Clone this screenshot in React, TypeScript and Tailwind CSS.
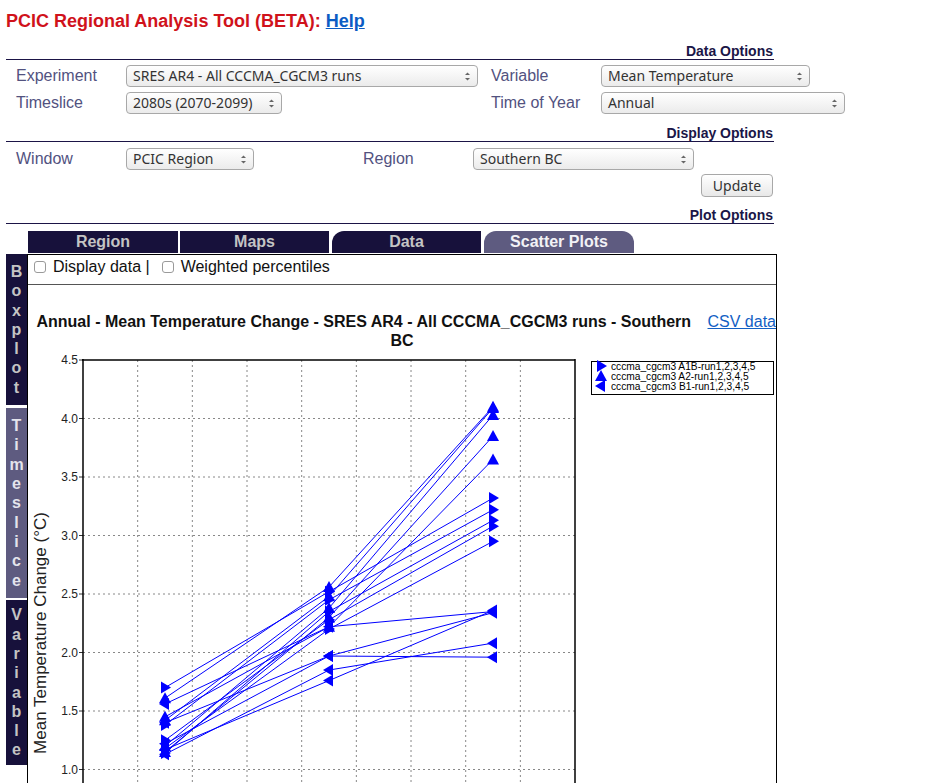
import React from "react";

const px = (x: number) => 83 + 54.67 * x;
const py = (v: number) => 360 + (4.5 - v) * 117;

type Run = { kind: "up" | "right" | "left"; vals: number[] };

const runs: Run[] = [
  { kind: "up", vals: [1.61, 2.56, 4.1] },
  { kind: "up", vals: [1.42, 2.48, 4.09] },
  { kind: "up", vals: [1.2, 2.38, 4.03] },
  { kind: "up", vals: [1.15, 2.3, 3.85] },
  { kind: "up", vals: [1.45, 2.22, 3.65] },
  { kind: "right", vals: [1.7, 2.52, 3.32] },
  { kind: "right", vals: [1.38, 2.45, 3.22] },
  { kind: "right", vals: [1.14, 2.35, 3.13] },
  { kind: "right", vals: [1.25, 2.28, 3.08] },
  { kind: "right", vals: [1.18, 2.2, 2.95] },
  { kind: "left", vals: [1.56, 2.22, 2.35] },
  { kind: "left", vals: [1.4, 1.97, 2.34] },
  { kind: "left", vals: [1.22, 1.97, 1.96] },
  { kind: "left", vals: [1.13, 1.85, 2.08] },
  { kind: "left", vals: [1.17, 1.76, 2.36] },
];

const Marker = ({ kind, x, y }: { kind: Run["kind"]; x: number; y: number }) => {
  let pts = "";
  if (kind === "up") pts = `${x},${y - 6} ${x - 6},${y + 5} ${x + 6},${y + 5}`;
  if (kind === "right") pts = `${x - 4},${y - 6} ${x - 4},${y + 6} ${x + 6},${y}`;
  if (kind === "left") pts = `${x + 4},${y - 6} ${x + 4},${y + 6} ${x - 6},${y}`;
  return <polygon points={pts} fill="#0000ff" />;
};

const Arrows = () => (
  <svg width="7" height="11" viewBox="0 0 7 11">
    <path d="M1 4 L3.5 1.5 L6 4 Z" fill="#666" />
    <path d="M1 7 L3.5 9.5 L6 7 Z" fill="#666" />
  </svg>
);

const Select = ({ value, width }: { value: string; width: string }) => (
  <div
    className={`${width} h-[22px] flex items-center justify-between pl-[6px] pr-[6px] border border-[#a8a8a8] rounded-[4px] bg-linear-to-b from-white to-[#ebebeb] text-[14px] text-[#333] font-['Noto_Sans',sans-serif]`}
  >
    <span className="leading-[20px]">{value}</span>
    <Arrows />
  </div>
);

const Label = ({ children }: { children: React.ReactNode }) => (
  <div className="text-[16px] leading-[22px] text-[#52527f]">{children}</div>
);

const Header = ({ children, className }: { children: React.ReactNode; className: string }) => (
  <div
    className={`${className} text-right text-[14px] font-bold leading-[16px] text-[#1a1647] border-b border-[#1b1446] pr-[1px]`}
  >
    {children}
  </div>
);

const VTab = ({ word, className }: { word: string; className: string }) => (
  <div className={`${className} flex flex-col items-center justify-center`}>
    {word.split("").map((c, i) => (
      <span key={i} className="text-[16px] font-bold leading-[19.3px]">
        {c}
      </span>
    ))}
  </div>
);

const Chart = () => {
  const hGrid = [4.0, 3.5, 3.0, 2.5, 2.0, 1.5, 1.0, 0.5];
  const ticks = [4.5, 4.0, 3.5, 3.0, 2.5, 2.0, 1.5, 1.0];
  const xs = [1.5, 4.5, 7.5];
  return (
    <svg width="748" height="440" viewBox="28 350 748 440" className="block">
      {hGrid.map((v) => (
        <line key={v} x1={83} x2={575} y1={py(v)} y2={py(v)} stroke="#888" strokeDasharray="2,3" />
      ))}
      {[1, 2, 3, 4, 5, 6, 7, 8].map((k) => (
        <line key={k} x1={px(k)} x2={px(k)} y1={360} y2={900} stroke="#888" strokeDasharray="2,3" />
      ))}
      {ticks.map((v) => (
        <g key={v}>
          <line x1={79} x2={83} y1={py(v)} y2={py(v)} stroke="#333" />
          <text
            x={78}
            y={py(v) + 4}
            textAnchor="end"
            fontSize="12"
            fill="#222"
            fontFamily="Liberation Sans, Arial, sans-serif"
          >
            {v.toFixed(1)}
          </text>
        </g>
      ))}
      <line x1={83} x2={83} y1={359} y2={900} stroke="#000" strokeWidth="1.5" />
      <line x1={82} x2={575} y1={360} y2={360} stroke="#000" strokeWidth="1.5" />
      <line x1={575} x2={575} y1={359} y2={900} stroke="#000" strokeWidth="1.5" />
      <text
        transform="translate(46,633) rotate(-90)"
        textAnchor="middle"
        fontSize="17"
        fill="#222"
        fontFamily="Liberation Sans, Arial, sans-serif"
      >
        Mean Temperature Change (°C)
      </text>
      {runs.map((r, i) => (
        <polyline
          key={i}
          points={r.vals.map((v, j) => `${px(xs[j])},${py(v)}`).join(" ")}
          fill="none"
          stroke="#0000ff"
          strokeWidth="1"
        />
      ))}
      {runs.map((r, i) =>
        r.vals.map((v, j) => <Marker key={`${i}-${j}`} kind={r.kind} x={px(xs[j])} y={py(v)} />)
      )}
      <rect x={591.5} y={361.5} width={182} height={33} fill="white" stroke="#000" />
      {[
        { kind: "right" as const, label: "cccma_cgcm3 A1B-run1,2,3,4,5", y: 366 },
        { kind: "up" as const, label: "cccma_cgcm3 A2-run1,2,3,4,5", y: 376 },
        { kind: "left" as const, label: "cccma_cgcm3 B1-run1,2,3,4,5", y: 386 },
      ].map((l) => (
        <g key={l.label}>
          <Marker kind={l.kind} x={601} y={l.y} />
          <text
            x={611}
            y={l.y + 3.5}
            fontSize="10.2"
            fill="#000"
            fontFamily="Liberation Sans, Arial, sans-serif"
          >
            {l.label}
          </text>
        </g>
      ))}
    </svg>
  );
};

const App = () => {
  return (
    <div className="w-[937px] min-h-[783px] bg-white font-['Liberation_Sans',Arial,sans-serif] overflow-hidden">
      <h1 className="pt-[10px] pl-[6px] text-[18px] font-bold leading-[22px] text-[#d0121b]">
        PCIC Regional Analysis Tool (BETA):{" "}
        <a href="#" className="text-[#0b5cc4] underline">
          Help
        </a>
      </h1>

      <div className="ml-[6px] w-[768px]">
        <Header className="mt-[11px]">Data Options</Header>
        <div className="grid grid-cols-[110px_365px_110px_1fr] gap-y-[5px] pl-[10px] mt-[5px]">
          <Label>Experiment</Label>
          <Select value="SRES AR4 - All CCCMA_CGCM3 runs" width="w-[352px]" />
          <Label>Variable</Label>
          <Select value="Mean Temperature" width="w-[209px]" />
          <Label>Timeslice</Label>
          <Select value="2080s (2070-2099)" width="w-[156px]" />
          <Label>Time of Year</Label>
          <Select value="Annual" width="w-[244px]" />
        </div>

        <Header className="mt-[11px]">Display Options</Header>
        <div className="grid grid-cols-[110px_237px_110px_1fr] pl-[10px] mt-[6px]">
          <Label>Window</Label>
          <Select value="PCIC Region" width="w-[128px]" />
          <Label>Region</Label>
          <Select value="Southern BC" width="w-[221px]" />
        </div>
        <div className="flex justify-end mt-[4px] pr-[1px]">
          <button className="w-[72px] h-[23px] border border-[#a8a8a8] rounded-[4px] bg-linear-to-b from-white to-[#e8e8e8] text-[14px] text-[#333] font-['Noto_Sans',sans-serif] leading-[20px]">
            Update
          </button>
        </div>

        <Header className="mt-[10px]">Plot Options</Header>
      </div>

      <div className="ml-[6px] mt-[7px] flex">
        <div className="w-[21px] pt-[23px] flex flex-col text-[#c4c4c4]">
          <VTab word="Boxplot" className="h-[151px] bg-[#17113b]" />
          <div className="h-[3px]" />
          <VTab word="Timeslice" className="h-[190px] bg-[#5e5b80] text-[#e4e4ec]" />
          <div className="h-[2px]" />
          <VTab word="Variable" className="h-[165px] bg-[#17113b]" />
        </div>

        <div className="w-[750px]">
          <div className="flex h-[23px] pl-[1px] text-[16px] font-bold leading-[22px] text-center">
            <div className="w-[150px] h-[22px] bg-[#17113b] text-[#c4c4c4]">Region</div>
            <div className="w-[149px] h-[22px] ml-[2px] bg-[#17113b] text-[#c4c4c4]">Maps</div>
            <div className="w-[149px] h-[22px] ml-[3px] bg-[#17113b] text-[#c4c4c4] rounded-tl-[12px]">
              Data
            </div>
            <div className="w-[150px] h-[22px] ml-[3px] bg-[#5e5b80] text-[#f2f2f6] rounded-t-[12px]">
              Scatter Plots
            </div>
          </div>

          <div className="border-l border-r border-t border-black">
            <div className="flex items-center pt-[2px] pb-[7px] border-b border-[#555] text-[16px] leading-[20px] text-[#111]">
              <span className="ml-[6px] w-[12px] h-[12px] rounded-[3px] border border-[#9a9a9a] bg-white" />
              <span className="ml-[7px]">Display data |</span>
              <span className="ml-[12px] w-[12px] h-[12px] rounded-[3px] border border-[#9a9a9a] bg-white" />
              <span className="ml-[7px]">Weighted percentiles</span>
            </div>

            <div className="pt-[27px] text-center text-[16px] font-bold leading-[19px] text-[#111]">
              <a href="#" className="float-right ml-[8px] font-normal text-[#1260c4] underline">
                CSV data
              </a>
              Annual - Mean Temperature Change - SRES AR4 - All CCCMA_CGCM3 runs - Southern BC
            </div>

            <Chart />
          </div>
        </div>
      </div>
    </div>
  );
};

export default App;
